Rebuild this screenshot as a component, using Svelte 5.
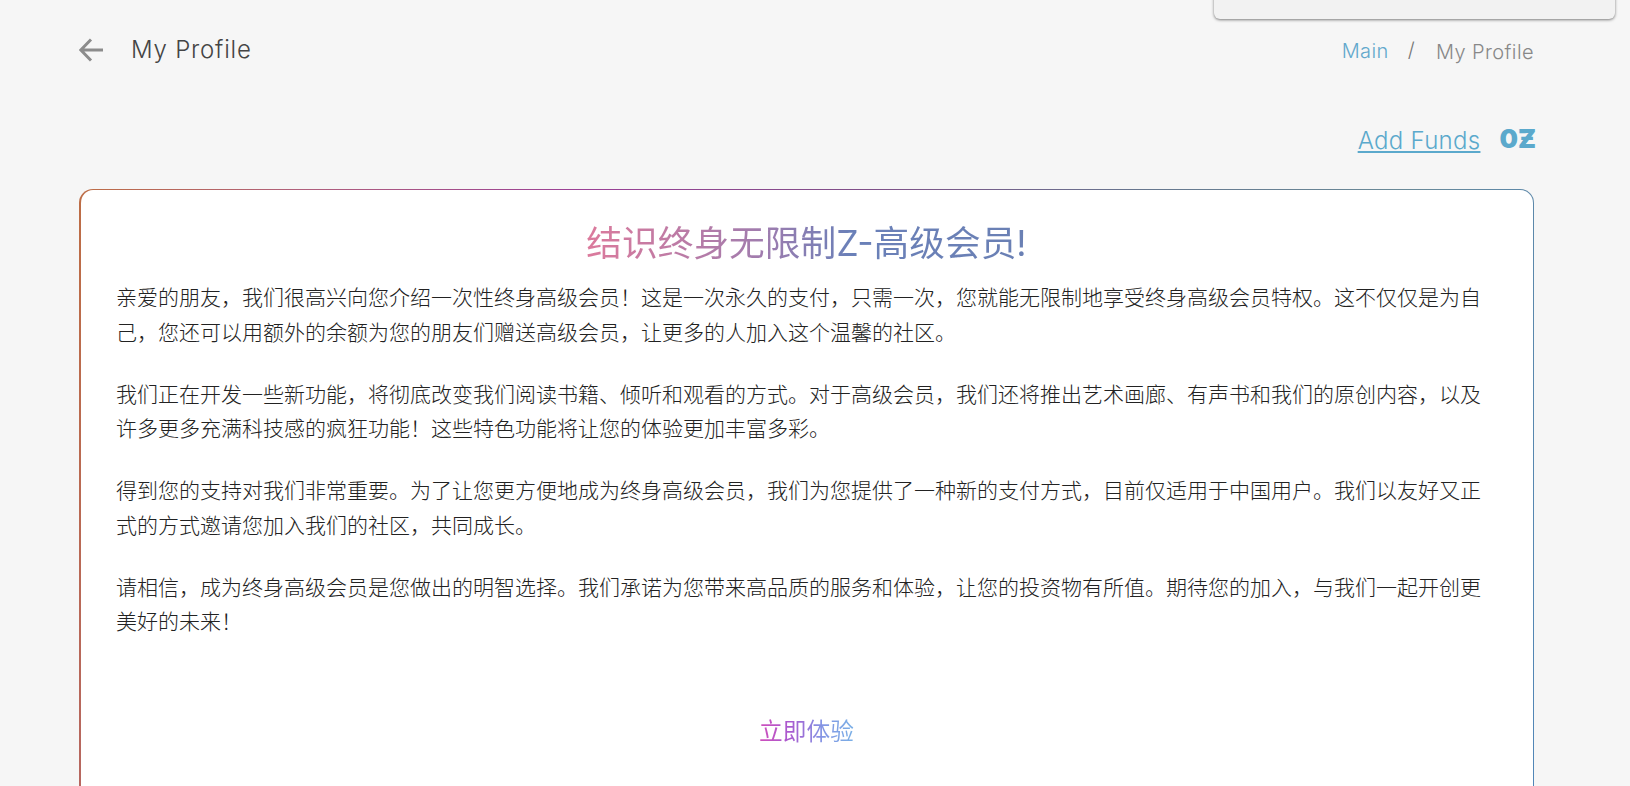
<script>
  const paragraphs = [
    '亲爱的朋友，我们很高兴向您介绍一次性终身高级会员！这是一次永久的支付，只需一次，您就能无限制地享受终身高级会员特权。这不仅仅是为自己，您还可以用额外的余额为您的朋友们赠送高级会员，让更多的人加入这个温馨的社区。',
    '我们正在开发一些新功能，将彻底改变我们阅读书籍、倾听和观看的方式。对于高级会员，我们还将推出艺术画廊、有声书和我们的原创内容，以及许多更多充满科技感的疯狂功能！这些特色功能将让您的体验更加丰富多彩。',
    '得到您的支持对我们非常重要。为了让您更方便地成为终身高级会员，我们为您提供了一种新的支付方式，目前仅适用于中国用户。我们以友好又正式的方式邀请您加入我们的社区，共同成长。',
    '请相信，成为终身高级会员是您做出的明智选择。我们承诺为您带来高品质的服务和体验，让您的投资物有所值。期待您的加入，与我们一起开创更美好的未来！'
  ];
</script>

<div class="page">
  <div class="popup"></div>

  <header class="top">
    <div class="heading">
      <svg class="back" width="24" height="24" viewBox="0 0 24 24" fill="none" stroke="#8c8c8c" stroke-width="3">
        <path d="M24 12H2M12 1.5 1.8 12 12 22.5" />
      </svg>
      <h1>My Profile</h1>
    </div>
    <nav class="crumbs">
      <a href="#main">Main</a>
      <span class="slash">/</span>
      <span class="current">My Profile</span>
    </nav>
  </header>

  <div class="funds">
    <a href="#funds">Add Funds</a>
    <strong>0Ƶ</strong>
  </div>

  <section class="card">
    <h2><span>结识终身无限制Z-高级会员!</span></h2>
    {#each paragraphs as p}
      <p>{p}</p>
    {/each}
    <div class="cta"><button>立即体验</button></div>
  </section>
</div>

<style>
  :global(body) {
    margin: 0;
    background: #f6f6f6;
    overflow: hidden;
  }
  .page {
    position: relative;
    height: 786px;
    overflow: hidden;
    padding: 0 96px 0 79px;
    box-sizing: border-box;
    font-family: Inter, "Noto Sans CJK SC", sans-serif;
    background: #f6f6f6;
  }
  .popup {
    position: absolute;
    top: -20px;
    left: 1214px;
    width: 401px;
    height: 39px;
    background: #f2f2f2;
    border-radius: 6px;
    box-shadow: 0 1px 3px rgba(0, 0, 0, 0.5);
  }
  .top {
    display: flex;
    justify-content: space-between;
    align-items: center;
    height: 100px;
  }
  .heading {
    display: flex;
    align-items: center;
    gap: 28px;
  }
  .back {
    display: block;
  }
  h1 {
    margin: -2px 0 0;
    font-size: 24px;
    font-weight: 300;
    letter-spacing: 0.8px;
    color: #444;
  }
  .crumbs {
    display: flex;
    align-items: center;
    font-size: 20px;
    font-weight: 300;
    letter-spacing: 0.4px;
  }
  .crumbs a {
    color: #62a8cc;
    text-decoration: none;
    margin-top: 1px;
  }
  .slash {
    margin: -1px 21px 0 19px;
    color: #777;
  }
  .current {
    color: #888;
    margin-top: 4px;
  }
  .funds {
    display: flex;
    justify-content: flex-end;
    align-items: center;
    gap: 19px;
    height: 40px;
    margin: 20px -2px 0 0;
  }
  .funds a {
    font-size: 24px;
    font-weight: 300;
    letter-spacing: 0.3px;
    color: #5ba9cc;
  }
  .funds strong {
    font-size: 26px;
    font-weight: 900;
    color: #5ba9cc;
    margin-top: -4px;
  }
  .card {
    margin-top: 29px;
    height: 700px;
    padding: 0 36px 0 35px;
    border: 1px solid transparent;
    border-left-width: 2px;
    border-radius: 14px;
    background:
      linear-gradient(#fff, #fff) padding-box,
      linear-gradient(100deg, #bd6d45 0%, #b0607c 14%, #9a3f96 32%, #7f4f88 50%, #66788f 68%, #6a8a98 84%, #4f86ba 100%) border-box;
  }
  h2 {
    margin: 27px 0 12px;
    text-align: center;
    font-size: 35.7px;
    font-weight: 400;
    line-height: 52px;
  }
  h2 span {
    background: linear-gradient(90deg, #dc7a9c 0%, #a07cae 40%, #6a80b8 60%, #6a80b4 100%);
    -webkit-background-clip: text;
    background-clip: text;
    color: transparent;
  }
  p {
    margin: 0 0 27.5px;
    font-size: 21px;
    line-height: 34.5px;
    font-weight: 300;
    color: #222;
  }
  .cta {
    display: flex;
    justify-content: center;
    margin-top: 73px;
  }
  button {
    border: 0;
    padding: 0;
    font-family: inherit;
    font-size: 23.7px;
    font-weight: 400;
    background: linear-gradient(90deg, #cf4fbc 0%, #a85ad0 33%, #8494e4 66%, #7ab0e6 100%);
    -webkit-background-clip: text;
    background-clip: text;
    color: transparent;
  }
</style>
